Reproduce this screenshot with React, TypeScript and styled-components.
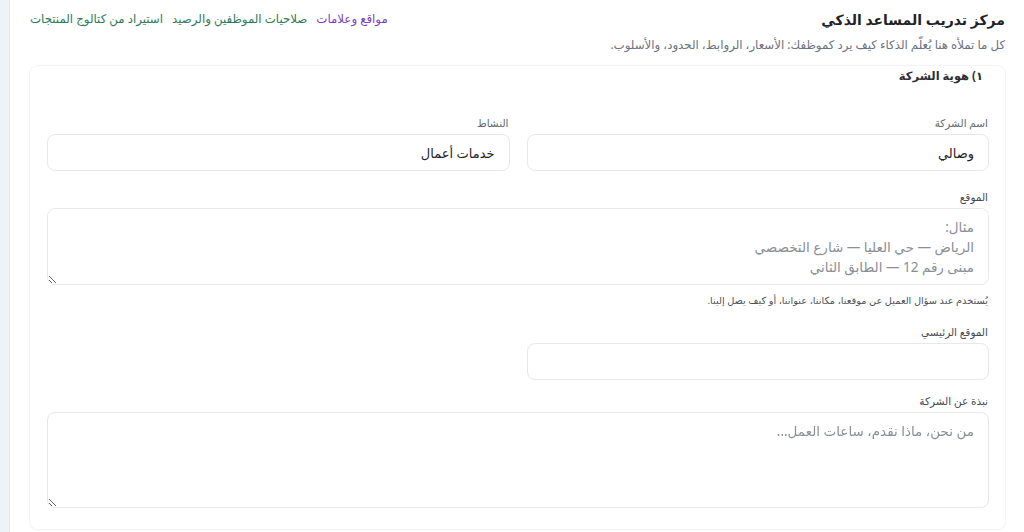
import React from "react";
import styled, { createGlobalStyle } from "styled-components";

const GlobalStyle = createGlobalStyle`
  html, body {
    margin: 0;
    padding: 0;
    background: #ffffff;
  }
  body {
    font-family: "Noto Sans", "DejaVu Sans", sans-serif;
    color: #1f2937;
  }
  * { box-sizing: border-box; }
`;

const Shell = styled.div`
  display: flex;
  flex-direction: row;
  min-height: 532px;
  direction: ltr;
`;

const SideEdge = styled.div`
  width: 10px;
  flex: 0 0 10px;
  background: #eef3f7;
  border-right: 1px solid #e4e9ee;
`;

const Main = styled.main`
  direction: rtl;
  flex: 1;
  padding: 8px 19px 0 20px;
`;

const Header = styled.header`
  display: flex;
  justify-content: space-between;
  align-items: flex-start;
  gap: 16px;
`;

const TitleBlock = styled.div`
  display: flex;
  flex-direction: column;
  gap: 4px;
`;

const Title = styled.h1`
  margin: 0;
  font-size: 14px;
  line-height: 24px;
  font-weight: 700;
  color: #1f2328;
`;

const Subtitle = styled.p`
  margin: 0;
  font-size: 11.8px;
  line-height: 16px;
  color: #6b7280;
`;

const Links = styled.nav`
  display: flex;
  gap: 9px;
  padding-top: 2px;
`;

const TopLink = styled.a<{ $tone: "purple" | "green" }>`
  font-size: 11.8px;
  line-height: 16px;
  text-decoration: none;
  color: ${(p) => (p.$tone === "purple" ? "#7b3fc2" : "#2f7a57")};
  cursor: pointer;
`;

const Card = styled.section`
  margin-top: 14px;
  background: #ffffff;
  border-radius: 8px;
  box-shadow: 0 0 0 1px #f2f4f6, 0 1px 4px rgba(15, 23, 42, 0.035);
  padding: 0 16px 21px 17px;
`;

const SectionTitle = styled.h2`
  margin: 0 6px 0 0;
  font-size: 11.5px;
  line-height: 20px;
  font-weight: 700;
  color: #2b2f36;
`;

const Row = styled.div<{ $top: number }>`
  display: grid;
  grid-template-columns: 1fr 1fr;
  column-gap: 17px;
  margin-top: ${(p) => p.$top}px;
`;

const Field = styled.label<{ $top?: number }>`
  display: flex;
  flex-direction: column;
  margin-top: ${(p) => p.$top ?? 0}px;
`;

const Label = styled.span<{ $strong?: boolean }>`
  font-size: 10.5px;
  line-height: 14px;
  margin-bottom: 4px;
  padding-right: 1px;
  color: ${(p) => (p.$strong ? "#454b54" : "#666b72")};
`;

const Input = styled.input`
  height: 37px;
  width: 100%;
  border: 1px solid #e6e8eb;
  border-radius: 8px;
  padding: 0 14px;
  font-family: inherit;
  font-size: 13px;
  color: #1f2328;
  background: #ffffff;
  outline: none;
  &::placeholder { color: #8a8f96; }
`;

const TextArea = styled.textarea<{ $height: number }>`
  height: ${(p) => p.$height}px;
  width: 100%;
  border: 1px solid #e6e8eb;
  border-radius: 8px;
  padding: 8px 14px;
  font-family: inherit;
  font-size: 13.5px;
  line-height: 20px;
  color: #1f2328;
  background: #ffffff;
  outline: none;
  resize: vertical;
  &::placeholder { color: #8a8f96; }
`;

const Hint = styled.small`
  display: block;
  margin-top: 10px;
  font-size: 9.8px;
  line-height: 12px;
  color: #4b5058;
  padding-right: 1px;
`;

export default function App() {
  return (
    <>
      <GlobalStyle />
      <Shell>
        <SideEdge />
        <Main>
          <Header>
            <TitleBlock>
              <Title>مركز تدريب المساعد الذكي</Title>
              <Subtitle>
                كل ما تملأه هنا يُعلّم الذكاء كيف يرد كموظفك: الأسعار، الروابط، الحدود، والأسلوب.
              </Subtitle>
            </TitleBlock>
            <Links>
              <TopLink $tone="purple">مواقع وعلامات</TopLink>
              <TopLink $tone="green">صلاحيات الموظفين والرصيد</TopLink>
              <TopLink $tone="green">استيراد من كتالوج المنتجات</TopLink>
            </Links>
          </Header>

          <Card>
            <SectionTitle>١) هوية الشركة</SectionTitle>

            <Row $top={30}>
              <Field>
                <Label>اسم الشركة</Label>
                <Input defaultValue="وصالي" />
              </Field>
              <Field>
                <Label>النشاط</Label>
                <Input defaultValue="خدمات أعمال" />
              </Field>
            </Row>

            <Field $top={19}>
              <Label $strong>الموقع</Label>
              <TextArea
                $height={77}
                placeholder={"مثال:\nالرياض — حي العليا — شارع التخصصي\nمبنى رقم 12 — الطابق الثاني"}
              />
            </Field>
            <Hint>يُستخدم عند سؤال العميل عن موقعنا، مكاننا، عنواننا، أو كيف يصل إلينا.</Hint>

            <Row $top={18}>
              <Field>
                <Label $strong>الموقع الرئيسي</Label>
                <Input />
              </Field>
            </Row>

            <Field $top={14}>
              <Label $strong>نبذة عن الشركة</Label>
              <TextArea $height={96} placeholder="من نحن، ماذا نقدم، ساعات العمل..." />
            </Field>
          </Card>
        </Main>
      </Shell>
    </>
  );
}
